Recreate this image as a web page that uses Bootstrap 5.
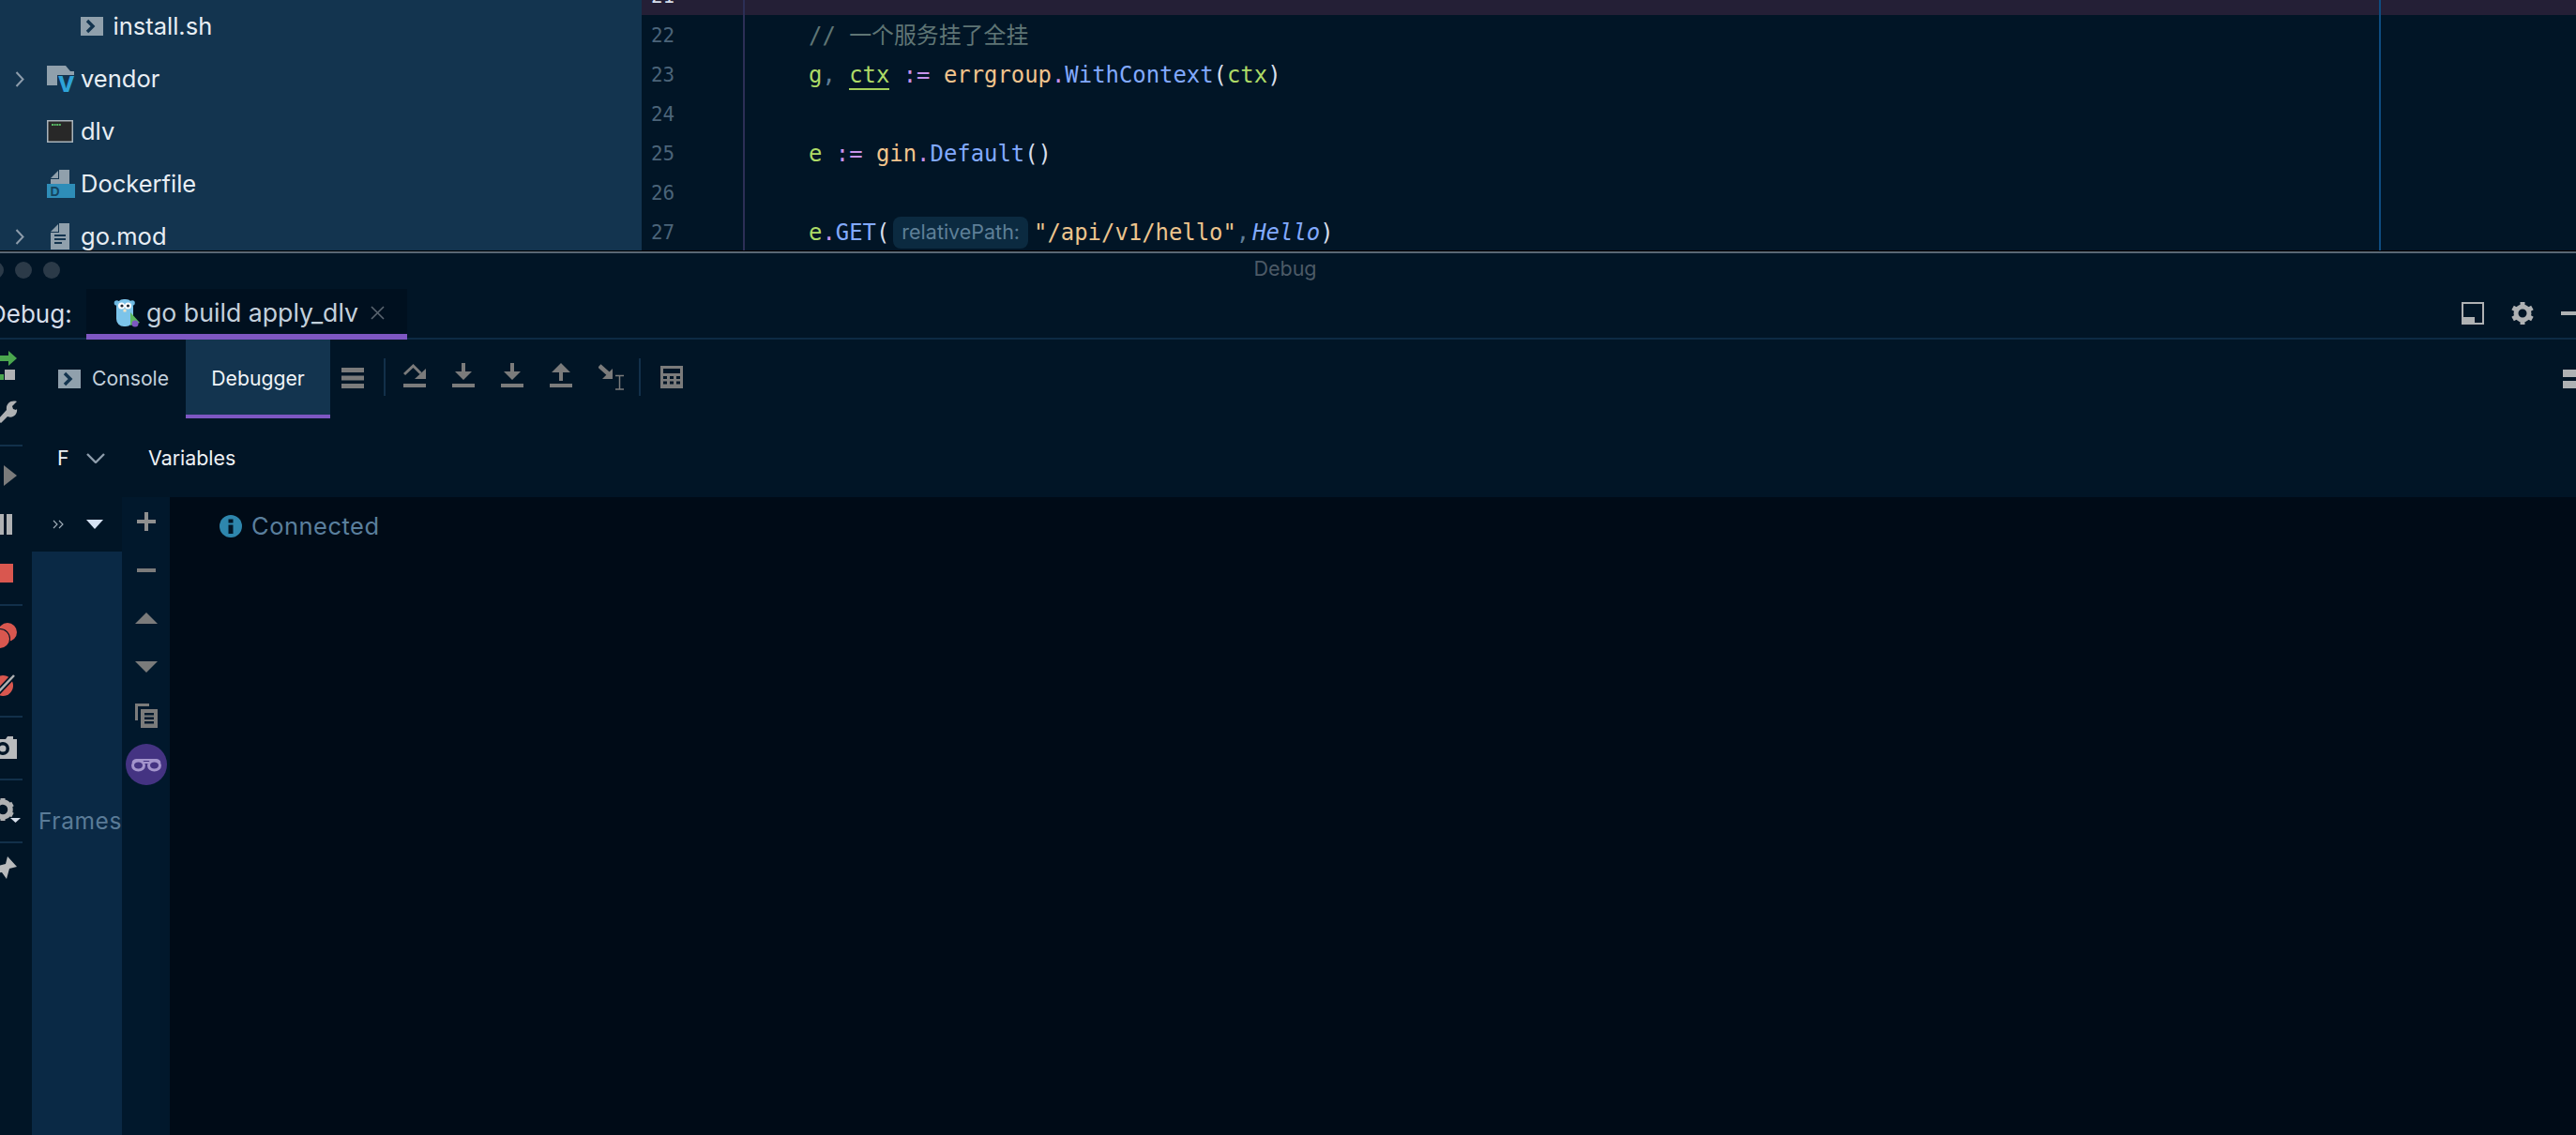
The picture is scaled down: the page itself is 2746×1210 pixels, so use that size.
<!DOCTYPE html>
<html lang="en">
<head>
<meta charset="utf-8">
<title>Debug</title>
<link rel="stylesheet" href="https://cdn.jsdelivr.net/npm/bootstrap@5.3.0/dist/css/bootstrap.min.css">
<style>
html,body{width:2746px;height:1210px;overflow:hidden;background:#011526;}
body{font-family:"Inter","Liberation Sans",sans-serif;color:#d6deeb;}
svg{display:block;flex:none;}
.ide-top{height:267px;overflow:hidden;background:#011526;}
.tree{width:684px;flex:none;background:#13344f;}
.tree-row{height:56px;flex:none;font-size:25.5px;color:#e8eef4;}
.tree-chev{width:50px;flex:none;padding-left:16px;}
.tree-ico{width:36px;flex:none;}
.tree-deep{padding-left:86px;}
.tree-deep .tree-ico{width:34.5px;}
.editor{min-width:0;margin-top:-26px;font-family:"DejaVu Sans Mono","Noto Sans CJK SC",monospace;font-size:23.9px;}
.code-row{height:42px;line-height:44px;}
.code-row.current{background:#241f36;}
.ln{width:110px;flex:none;padding-left:10px;font-size:20.9px;color:#4b6479;border-right:2px solid #2c2f56;}
.ln.now{color:#d6deeb;}
.lc{width:1744px;flex:none;padding-left:68px;border-right:2px solid #0e4c80;color:#d6deeb;white-space:pre;}
.cm{color:#5f7575;}.gv{color:#addb67;}.pu{color:#c792ea;}.or{color:#f2c48d;}.bl{color:#82aaff;}.gy{color:#5f7e97;}.st{color:#ecc48d;}
.ul{border-bottom:2px solid #a4d05a;}
.it{font-style:italic;margin-left:3px;}
.hint{display:inline-block;height:34px;line-height:32px;padding:0 9px;margin:0 6px 0 4px;background:#0b2a40;border-radius:8px;font-family:"Inter","Liberation Sans",sans-serif;font-size:21.5px;color:#5e7f97;vertical-align:1px;}
.split{height:3px;background:#5a6875;flex:none;border-top:1px solid #000;}
.titlebar{height:38px;position:relative;background:#011526;}
.lights{margin:0 0 2px -14px;gap:12px;}
.lights span{width:18px;height:18px;border-radius:50%;background:#2b3a48;}
.title-txt{font-size:21.5px;color:#4c5a66;position:absolute;left:0;right:0;top:3px;text-align:center;line-height:26px;margin-left:-6px;}
.tabbar{height:54px;background:#011526;border-bottom:2px solid #0d2a44;}
.dbg-lbl{font-size:26px;width:92px;flex:none;margin-left:-12px;padding-left:0;color:#d6deeb;}
.dbg-tab{width:342px;height:54px;flex:none;background:#00101f;border-bottom:6px solid #7e57c2;padding:3px 0 0 29px;font-size:26.7px;color:#c3d0dc;margin-left:12px;}
.dbg-tab .nm{margin:0 13px 0 7px;}
.tab-tools{gap:28px;margin-right:-6px;}
.workbench{height:848px;background:#011526;}
.railx{width:34px;flex:none;overflow:hidden;padding-top:2px;}
.rail-i{height:52px;}
.rail-i.s{height:50px;}
.rail-sep{height:2px;width:24px;background:#12304a;margin:7px 0 6px;}
.rail-sep.a{margin:10px 0 5px;}
.rail-sep.z{margin-bottom:0;}
.dbg-tabs{height:84px;}
.dt{height:84px;font-size:21.2px;padding-top:0;}
.dt-con{width:164px;padding-left:28px;color:#c3d0dc;gap:12px;height:84px;}
.dt-act{width:154px;background:#13344f;border-bottom:4px solid #7e57c2;padding-top:4px;color:#f0f4f8;justify-content:center;}
.tool-b{width:45px;margin:0 0 2px 12px;}
.v-sep{width:2px;height:40px;background:#12304a;flex:none;margin-bottom:4px;}
.step-set{margin:0 0 6px 19px;gap:28px;}
.calc-i{margin:0 0 4px 21px;}
.subhead{height:84px;font-size:21.4px;color:#eef2f6;}
.f-clip{width:12px;overflow:hidden;margin-left:27px;flex:none;}
.panes{height:680px;}
.frames{width:96px;flex:none;}
.frames-h{height:58px;padding-left:22px;gap:24px;}
.frames-b{flex:1;background:#0a2945;padding:272px 0 0 7px;overflow:hidden;font-size:24.5px;color:#5a7b97;letter-spacing:.6px;white-space:nowrap;line-height:30px;}
.side{width:51px;flex:none;background:#01182c;}
.side-i{height:51.8px;flex:none;}
.eye{width:44px;height:44px;border-radius:50%;background:#443382;}
.console{background:#000b17;padding:17px 0 0 53px;gap:10px;font-size:25.5px;color:#5a7f9d;letter-spacing:.5px;height:680px;align-items:flex-start;}
.console .row-c{gap:10px;height:28px;}
</style>
</head>
<body class="d-flex flex-column">

<section class="ide-top d-flex flex-shrink-0">
  <nav class="tree d-flex flex-column">
    <div class="tree-row tree-deep d-flex align-items-center">
      <span class="tree-ico"><svg width="24" height="20" viewBox="0 0 24 20"><rect width="24" height="20" fill="#90a0ac"/><path d="M7 4l6 6-6 6" fill="none" stroke="#13344f" stroke-width="3.4"/></svg></span>install.sh
    </div>
    <div class="tree-row d-flex align-items-center">
      <span class="tree-chev"><svg width="10" height="17" viewBox="0 0 10 17"><path d="M1.5 1l7 7.500-7 7.500" fill="none" stroke="#8d9cab" stroke-width="2"/></svg></span>
      <span class="tree-ico"><svg width="30" height="28" viewBox="0 0 30 28"><path d="M0 0h20l5 6h4v15H0z" fill="#90a0ac"/><path d="M11 10h19v18H11z" fill="#13344f"/><text x="12" y="28" font-family="Liberation Sans" font-weight="700" font-size="31" fill="#2ea3d8">v</text></svg></span>vendor
    </div>
    <div class="tree-row d-flex align-items-center">
      <span class="tree-chev"></span>
      <span class="tree-ico"><svg width="28" height="24" viewBox="0 0 28 24"><rect x=".75" y=".75" width="26.500" height="22.500" fill="#282828" stroke="#a9b4bc" stroke-width="1.500"/><path d="M5 5h10" stroke="#57b864" stroke-width="2" stroke-dasharray="2 .6"/></svg></span>dlv
    </div>
    <div class="tree-row d-flex align-items-center">
      <span class="tree-chev"></span>
      <span class="tree-ico"><svg width="30" height="30" viewBox="0 0 30 30"><path d="M13 0h11v15H4v-5h9zM4 9l8-8v8z" fill="#90a0ac"/><rect y="15" width="30" height="15" fill="#2e8db8"/><text x="3.500" y="27.500" font-family="Liberation Sans" font-weight="700" font-size="14" fill="#14445f">D</text></svg></span>Dockerfile
    </div>
    <div class="tree-row d-flex align-items-center">
      <span class="tree-chev"><svg width="10" height="17" viewBox="0 0 10 17"><path d="M1.5 1l7 7.500-7 7.500" fill="none" stroke="#8d9cab" stroke-width="2"/></svg></span>
      <span class="tree-ico"><svg width="30" height="28" viewBox="0 0 30 28"><path d="M13 0h11v28H4V10h9zM4 9l8-8v8z" fill="#90a0ac"/><path d="M8 13h12M8 17h12M8 21h8" stroke="#13344f" stroke-width="2"/></svg></span>go.mod
    </div>
  </nav>
  <div class="editor flex-grow-1">
    <div class="code-row current d-flex"><div class="ln now">21</div><div class="lc"></div></div>
    <div class="code-row d-flex"><div class="ln">22</div><div class="lc"><span class="cm">// 一个服务挂了全挂</span></div></div>
    <div class="code-row d-flex"><div class="ln">23</div><div class="lc"><span class="gv">g</span><span class="gy">, </span><span class="gv ul">ctx</span> <span class="pu">:=</span> <span class="or">errgroup</span><span class="pu">.</span><span class="bl">WithContext</span>(<span class="gv">ctx</span>)</div></div>
    <div class="code-row d-flex"><div class="ln">24</div><div class="lc"></div></div>
    <div class="code-row d-flex"><div class="ln">25</div><div class="lc"><span class="gv">e</span> <span class="pu">:=</span> <span class="or">gin</span><span class="pu">.</span><span class="bl">Default</span>()</div></div>
    <div class="code-row d-flex"><div class="ln">26</div><div class="lc"></div></div>
    <div class="code-row d-flex"><div class="ln">27</div><div class="lc"><span class="gv">e</span><span class="pu">.</span><span class="bl">GET</span>(<span class="hint">relativePath:</span><span class="st">"/api/v1/hello"</span><span class="gy">,</span><span class="bl it">Hello</span>)</div></div>
  </div>
</section>
<div class="split"></div>

<div class="titlebar d-flex align-items-center flex-shrink-0">
  <div class="lights d-flex"><span></span><span></span><span></span></div>
  <div class="title-txt">Debug</div>
</div>

<div class="tabbar d-flex align-items-start flex-shrink-0">
  <div class="dbg-lbl d-flex align-items-center h-100">Debug:</div>
  <div class="dbg-tab d-flex align-items-center">
    <svg width="28" height="31" viewBox="0 0 28 31"><circle cx="3.500" cy="5" r="2.800" fill="#6cb7e0"/><circle cx="20" cy="5" r="2.800" fill="#6cb7e0"/><rect x="3" y="1" width="18" height="29" rx="8" fill="#7cc4ea"/><circle cx="8.500" cy="8" r="3.500" fill="#fff"/><circle cx="15.500" cy="8" r="3.500" fill="#fff"/><circle cx="9" cy="8" r="1.600" fill="#1c2a36"/><circle cx="15.500" cy="8" r="1.600" fill="#1c2a36"/><rect x="10.500" y="11.500" width="3" height="3" fill="#f3e3c4"/><path d="M18 15l10 11-10 3z" fill="#5cb85c"/><circle cx="23" cy="27" r="3.500" fill="#7e57c2"/></svg>
    <span class="nm">go build apply_dlv</span>
    <svg width="15" height="15" viewBox="0 0 15 15"><path d="M1 1l13 13M14 1L1 14" stroke="#5a6570" stroke-width="1.600"/></svg>
  </div>
  <div class="tab-tools ms-auto d-flex align-items-center h-100">
    <svg width="24" height="24" viewBox="0 0 24 24"><rect x="1" y="1" width="22" height="22" fill="none" stroke="#afb1b3" stroke-width="2"/><rect y="16" width="14" height="8" fill="#afb1b3"/></svg>
    <svg width="26" height="26" viewBox="0 0 26 26"><circle cx="13" cy="13" r="7" fill="none" stroke="#afb1b3" stroke-width="5"/><path d="M13 1v5M13 20v5M2.600 7l4.300 2.500M19.100 16.500l4.300 2.500M2.600 19l4.300-2.500M19.100 9.500L23.400 7" stroke="#afb1b3" stroke-width="5"/></svg>
    <svg width="22" height="4" viewBox="0 0 22 4"><rect width="22" height="4" fill="#afb1b3"/></svg>
  </div>
</div>

<div class="workbench d-flex flex-shrink-0">
  <aside class="railx d-flex flex-column">
    <div class="rail-i s d-flex align-items-center"><svg width="34" height="40" viewBox="0 0 34 40"><path d="M-4 10h13V5l9 8-9 8v-5H-4z" fill="#4aa64e"/><rect x="5" y="25" width="11" height="11" fill="#afb1b3"/><rect x="-8" y="30" width="12" height="6" fill="#4aa64e"/></svg></div>
    <div class="rail-i s d-flex align-items-center"><svg width="34" height="24" viewBox="0 0 34 24"><path d="M-3 21L7 10C6 4 11-1 18 1l-5 5 1 3 3 1 1-1c1 5-4 11-10 8L1 24z" fill="#afb1b3"/></svg></div>
    <div class="rail-sep a"></div>
    <div class="rail-i d-flex align-items-center"><svg width="34" height="24" viewBox="0 0 34 24"><path d="M4 1l14 11L4 23z" fill="#7b7b7b"/></svg></div>
    <div class="rail-i d-flex align-items-center"><svg width="34" height="22" viewBox="0 0 34 22"><rect x="-3" width="7" height="22" fill="#afb1b3"/><rect x="7" width="6" height="22" fill="#afb1b3"/></svg></div>
    <div class="rail-i d-flex align-items-center"><svg width="34" height="20" viewBox="0 0 34 20"><rect x="-6" width="20" height="20" fill="#d9574f"/></svg></div>
    <div class="rail-sep"></div>
    <div class="rail-i d-flex align-items-center"><svg width="34" height="28" viewBox="0 0 34 28"><circle cx="8" cy="10" r="10" fill="#d9574f"/><circle cx="0" cy="17" r="11" fill="#011526"/><circle cx="0" cy="17" r="10" fill="#d9574f"/></svg></div>
    <div class="rail-i d-flex align-items-center"><svg width="34" height="24" viewBox="0 0 34 24"><circle cx="3" cy="13" r="11" fill="#d9574f"/><path d="M-2 20L15 2" stroke="#011526" stroke-width="6"/><path d="M-2 20L15 2" stroke="#afb1b3" stroke-width="2.500"/></svg></div>
    <div class="rail-sep"></div>
    <div class="rail-i d-flex align-items-center"><svg width="34" height="24" viewBox="0 0 34 24"><path d="M-8 3h14l2-3h6v3h4v21H-8z" fill="#b9bbbd"/><circle cx="3" cy="13" r="7" fill="#011526"/><circle cx="3" cy="13" r="3.500" fill="#b9bbbd"/></svg></div>
    <div class="rail-sep"></div>
    <div class="rail-i d-flex align-items-center"><svg width="34" height="30" viewBox="0 0 34 30"><circle cx="3" cy="14" r="8" fill="none" stroke="#afb1b3" stroke-width="5.500"/><path d="M3 2v4M3 22v4M13.500 8l-3.500 2M13.500 20L10 18" stroke="#afb1b3" stroke-width="5"/><path d="M11 23h11l-5.500 5z" fill="#d6deeb"/></svg></div>
    <div class="rail-sep z"></div>
    <div class="rail-i d-flex align-items-center"><svg width="34" height="24" viewBox="0 0 34 24"><path d="M8 0l10 11-8 2-3 11-5-7-8 1 4-8 8-2z" fill="#b9bbbd"/></svg></div>
  </aside>

  <main class="flex-grow-1 d-flex flex-column" style="min-width:0">
    <div class="dbg-tabs d-flex align-items-center">
      <div class="dt dt-con d-flex align-items-center">
        <svg width="24" height="20" viewBox="0 0 24 20"><rect width="24" height="20" fill="#90a0ac"/><path d="M7 4l6 6-6 6" fill="none" stroke="#13344f" stroke-width="3.400"/></svg>Console
      </div>
      <div class="dt dt-act d-flex align-items-center">Debugger</div>
      <div class="tool-b d-flex"><svg width="24" height="22" viewBox="0 0 24 22"><path d="M0 0h24v5H0zM0 8.500h24v5H0zM0 17h24v5H0z" fill="#7b7b7b"/></svg></div>
      <div class="v-sep"></div>
      <div class="step-set d-flex align-items-start">
        <svg width="24" height="26" viewBox="0 0 24 26"><path d="M0 22h24v4H0z" fill="#7b7b7b"/><path d="M1 12l9.500-9 8 8" fill="none" stroke="#7b7b7b" stroke-width="3"/><path d="M24 17H12L24 6z" fill="#7b7b7b"/></svg>
        <svg width="24" height="26" viewBox="0 0 24 26"><path d="M0 22h24v4H0zM10 0h4v9h7l-9 9-9-9h7z" fill="#7b7b7b"/></svg>
        <svg width="24" height="26" viewBox="0 0 24 26"><path d="M0 22h24v4H0zM10 0h4v9h7l-9 9-9-9h7z" fill="#7b7b7b"/></svg>
        <svg width="24" height="26" viewBox="0 0 24 26"><path d="M0 22h24v4H0zM12 0l10 10h-8v9h-4v-9H2z" fill="#7b7b7b"/></svg>
        <svg width="27" height="29" viewBox="0 0 27 29"><path d="M1 3l10 9" fill="none" stroke="#7b7b7b" stroke-width="4.500"/><path d="M15 6v11H4z" fill="#7b7b7b"/><path d="M18 13.500h9M18 28h9M22.500 13v15" stroke="#7b7b7b" stroke-width="1.500"/></svg>
      </div>
      <div class="v-sep" style="margin-left:16px"></div>
      <svg class="calc-i" width="24" height="24" viewBox="0 0 24 24"><path fill-rule="evenodd" d="M0 0h24v24H0zM3 3v5h18V3zM3 11v3h4v-3zM10 11v3h4v-3zM17 11v3h4v-3zM3 16.500v3h4v-3zM10 16.500v3h4v-3zM17 16.500v3h4v-3z" fill="#7b7b7b"/></svg>
      <svg class="ms-auto" width="14" height="20" viewBox="0 0 14 20"><path d="M0 0h14v8H0zM0 12h14v8H0z" fill="#afb1b3"/></svg>
    </div>
    <div class="subhead d-flex align-items-center">
      <div class="f-clip">Frames</div>
      <svg width="20" height="11" viewBox="0 0 20 11" style="margin-left:19px"><path d="M1 1l9 9 9-9" fill="none" stroke="#8d9cab" stroke-width="2.400"/></svg>
      <span style="margin-left:46px">Variables</span>
    </div>
    <div class="panes d-flex">
      <div class="frames d-flex flex-column">
        <div class="frames-h d-flex align-items-center">
          <svg width="12" height="10" viewBox="0 0 12 10"><path d="M1 1l4 4-4 4M7 1l4 4-4 4" fill="none" stroke="#a3b0bb" stroke-width="1.100"/></svg>
          <svg width="18" height="10" viewBox="0 0 18 10"><path d="M0 0h18l-9 10z" fill="#d6e2f2"/></svg>
        </div>
        <div class="frames-b">Frames</div>
      </div>
      <div class="side d-flex flex-column">
        <div class="side-i d-flex align-items-center justify-content-center"><svg width="20" height="20" viewBox="0 0 20 20"><path d="M8 0h4v8h8v4h-8v8H8v-8H0V8h8z" fill="#8f8f8f"/></svg></div>
        <div class="side-i d-flex align-items-center justify-content-center"><svg width="20" height="4" viewBox="0 0 20 4"><rect width="20" height="4" fill="#7b7b7b"/></svg></div>
        <div class="side-i d-flex align-items-center justify-content-center"><svg width="24" height="12" viewBox="0 0 24 12"><path d="M12 0l12 12H0z" fill="#7b7b7b"/></svg></div>
        <div class="side-i d-flex align-items-center justify-content-center"><svg width="24" height="12" viewBox="0 0 24 12"><path d="M0 0h24L12 12z" fill="#7b7b7b"/></svg></div>
        <div class="side-i d-flex align-items-center justify-content-center"><svg width="24" height="26" viewBox="0 0 24 26"><path d="M0 0h15v3H3v15H0z" fill="#7b7b7b"/><path fill-rule="evenodd" d="M6 6h18v20H6zM10 10v2.500h10V10zM10 14.500V17h10v-2.500zM10 19v2.500h10V19z" fill="#7b7b7b"/></svg></div>
        <div class="side-i d-flex align-items-center justify-content-center"><div class="eye d-flex align-items-center justify-content-center"><svg width="32" height="16" viewBox="0 0 32 16"><ellipse cx="7.500" cy="9" rx="6" ry="5" fill="none" stroke="#a394cc" stroke-width="3"/><ellipse cx="24.500" cy="9" rx="6" ry="5" fill="none" stroke="#a394cc" stroke-width="3"/><path d="M1.500 6q1-3 4-3h21q3 0 4 3M13 6h6" fill="none" stroke="#a394cc" stroke-width="2"/></svg></div></div>
      </div>
      <div class="console flex-grow-1 d-flex">
        <div class="row-c d-flex align-items-center">
          <svg width="24" height="24" viewBox="0 0 24 24"><circle cx="12" cy="12" r="12" fill="#2e86ad"/><rect x="9.500" y="4.500" width="5" height="4" fill="#011526"/><rect x="9.500" y="10.500" width="5" height="9.500" fill="#011526"/></svg>
          <span>Connected</span>
        </div>
      </div>
    </div>
  </main>
</div>
</body>
</html>
